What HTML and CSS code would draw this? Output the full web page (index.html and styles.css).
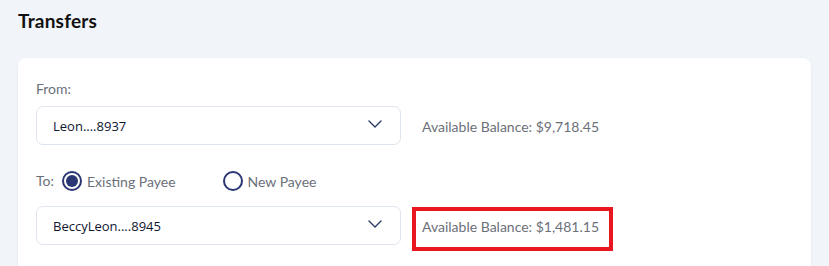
FILE: index.html
```html
<!DOCTYPE html>
<html lang="en">
<head>
    <meta charset="UTF-8">
    <meta name="viewport" content="width=device-width, initial-scale=1.0">
    <title>Transfers</title>
    <link rel="stylesheet" href="styles.css">
</head>
<body>
    <div class="page">
        <h1 class="page-title">Transfers</h1>
        <div class="card">
            <label class="field-label">From:</label>
            <div class="account-row">
                <div class="select">
                    <span>Leon....8937</span>
                    <svg class="chevron" width="14" height="8" viewBox="0 0 14 8"><path d="M1 1l6 6 6-6" fill="none" stroke="#2b3a67" stroke-width="1.4" stroke-linecap="round" stroke-linejoin="round"/></svg>
                </div>
                <span class="balance">Available Balance: $9,718.45</span>
            </div>

            <div class="payee-row">
                <span class="field-label">To:</span>
                <label class="radio checked"><span class="dot"></span>Existing Payee</label>
                <label class="radio"><span class="dot"></span>New Payee</label>
            </div>
            <div class="account-row payee-account">
                <div class="select">
                    <span>BeccyLeon....8945</span>
                    <svg class="chevron" width="14" height="8" viewBox="0 0 14 8"><path d="M1 1l6 6 6-6" fill="none" stroke="#2b3a67" stroke-width="1.4" stroke-linecap="round" stroke-linejoin="round"/></svg>
                </div>
                <span class="balance highlight">Available Balance: $1,481.15</span>
            </div>
        </div>
    </div>
</body>
</html>
```

FILE: styles.css
```css
body {
    margin: 0;
    background-color: #f1f4f8;
    font-family: Lato, 'Open Sans', sans-serif;
    overflow: hidden;
}
.page {
    padding: 10px 18px 0;
}
.page-title {
    margin: 0;
    font-size: 19px;
    line-height: 22px;
    font-weight: 700;
    letter-spacing: 0.2px;
    color: #111111;
}
.card {
    margin-top: 26px;
    background-color: #ffffff;
    border-radius: 8px;
    box-shadow: 0 1px 3px rgba(30, 50, 80, 0.06);
    padding: 22px 18px 40px;
    min-height: 160px;
}
.field-label {
    display: block;
    font-size: 14px;
    line-height: 18px;
    color: #6b7079;
}
.account-row {
    display: flex;
    align-items: flex-start;
    margin-top: 8px;
}
.payee-account {
    margin-top: 15px;
}
.select {
    box-sizing: border-box;
    width: 365px;
    height: 39px;
    border: 1px solid #dfe5ee;
    border-radius: 7px;
    display: flex;
    align-items: center;
    justify-content: space-between;
    padding: 0 18px 0 16px;
    font-family: 'Open Sans', sans-serif;
    font-size: 13px;
    color: #0f1630;
}
.chevron {
    margin-top: -3px;
}
.balance {
    margin: 1px 0 -6px 11px;
    padding: 6px 10px 10px 6px;
    border: 4px solid transparent;
    font-size: 14px;
    line-height: 20px;
    color: #6b7079;
}
.balance.highlight {
    border-color: #e8161e;
}
.payee-row {
    display: flex;
    align-items: center;
    margin-top: 26px;
    font-size: 14px;
    color: #6b7079;
}
.payee-row .field-label {
    margin-right: 8px;
}
.radio {
    display: flex;
    align-items: center;
    gap: 5px;
    margin-right: 47px;
}
.dot {
    box-sizing: border-box;
    width: 20px;
    height: 20px;
    border: 2px solid #2b3674;
    border-radius: 50%;
    position: relative;
}
.radio.checked .dot::after {
    content: '';
    position: absolute;
    top: 2px;
    left: 2px;
    width: 12px;
    height: 12px;
    border-radius: 50%;
    background-color: #2b3674;
}
```
